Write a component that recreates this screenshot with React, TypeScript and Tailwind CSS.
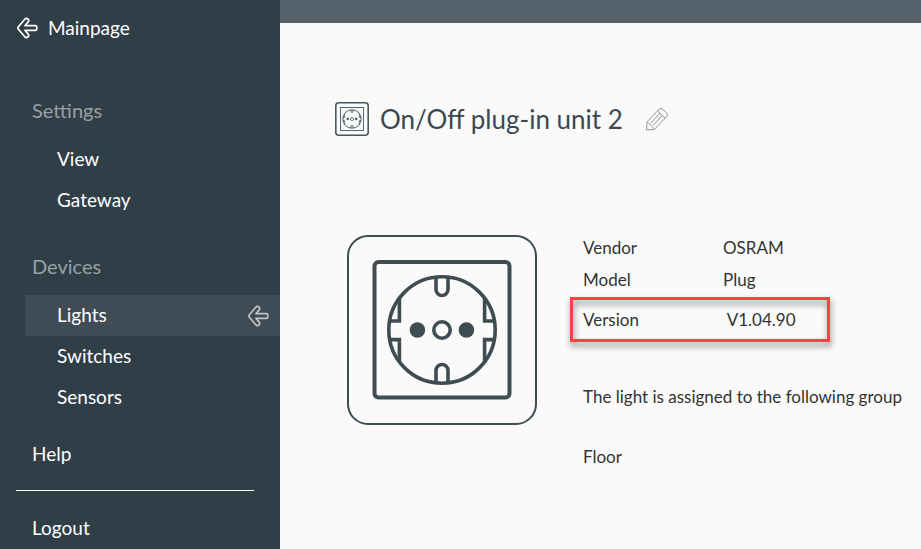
import clsx from 'clsx';

interface NavItem {
  label: string;
  active?: boolean;
}

const settingsItems: NavItem[] = [{ label: 'View' }, { label: 'Gateway' }];

const deviceItems: NavItem[] = [
  { label: 'Lights', active: true },
  { label: 'Switches' },
  { label: 'Sensors' },
];

const details = [
  { label: 'Vendor', value: 'OSRAM' },
  { label: 'Model', value: 'Plug' },
];

function ArrowIcon({ className }: { className?: string }) {
  return (
    <svg viewBox="0 0 22 22" fill="none" stroke="currentColor" strokeLinejoin="round" className={clsx('w-[22px] h-[22px] shrink-0', className)} aria-hidden="true">
      <path
        strokeWidth="1.7"
        d="M2.4 9.7 9 2Q10.4.8 11.9 2 13.3 3.4 12.2 4.9L8.9 8.7H19.3Q20.8 8.7 20.8 10.1V11.9Q20.8 13.3 19.3 13.3H8.9L12.2 17.1Q13.3 18.6 11.9 20 10.4 21.2 9 20L2.4 12.3Q1.3 11 2.4 9.7Z"
      />
    </svg>
  );
}

function SocketIcon() {
  return (
    <svg viewBox="0 0 190 190" fill="none" stroke="#3e4d52" className="w-[190px] h-[190px] shrink-0" role="img" aria-label="Plug">
      <rect x="1" y="1" width="188" height="188" rx="20" strokeWidth="2" />
      <rect x="27.5" y="27" width="135" height="135.5" rx="4" strokeWidth="4" />
      <g strokeWidth="3.6">
        <circle cx="95" cy="95" r="53.2" />
        <circle cx="95" cy="95" r="8.2" />
        <path d="M89 42.5V54.5a6 6 0 0 0 12 0V42.5M89 147.5V135.5a6 6 0 0 1 12 0V147.5" />
        <path d="M52.4 62V86H43M52.4 128V104.6H43M137.6 62V86H147M137.6 128V104.6H147" />
      </g>
      <circle cx="70.4" cy="95" r="7.8" fill="#3e4d52" stroke="none" />
      <circle cx="119.4" cy="95" r="7.8" fill="#3e4d52" stroke="none" />
    </svg>
  );
}

function SmallSocketIcon() {
  return (
    <svg viewBox="0 0 34 34" fill="none" stroke="#4a585f" className="w-[34px] h-[34px] shrink-0" aria-hidden="true">
      <rect x="0.8" y="0.8" width="32.4" height="32.4" rx="3" strokeWidth="1.6" />
      <rect x="5.5" y="5.5" width="23" height="23" strokeWidth="0.9" />
      <circle cx="17" cy="17" r="9.2" strokeWidth="1" />
      <circle cx="17" cy="17" r="1.5" strokeWidth="0.8" />
      <path d="M16 8v2.2h2V8M16 26v-2.2h2V26M9.6 11.5v4H8M9.6 22.5v-4H8M24.4 11.5v4H26M24.4 22.5v-4H26" strokeWidth="0.8" />
      <circle cx="12.8" cy="17" r="1.3" fill="#4a585f" stroke="none" />
      <circle cx="21.2" cy="17" r="1.3" fill="#4a585f" stroke="none" />
    </svg>
  );
}

function PencilIcon() {
  return (
    <svg viewBox="0 0 24 24" fill="none" stroke="#8f9598" strokeWidth="1" strokeLinejoin="round" className="w-6 h-6" aria-hidden="true">
      <path d="M1.5 23 2.2 14.8 14.3 2Q15.7.7 17.3 1.9L21.9 6.2Q23.2 7.7 22 9.3L9.6 22.2Z" />
      <path d="M2.2 14.8 9.6 22.2M5.6 16.2 15.2 6M7.8 18.6 17.8 8.2M12.4 3.9 20.1 11.2" />
    </svg>
  );
}

function NavGroup({ title, items }: { title: string; items: NavItem[] }) {
  return (
    <section>
      <h2 className="flex h-[58px] items-center pl-8 text-xl text-[#98a0a5]">{title}</h2>
      <ul>
        {items.map((item) => (
          <li key={item.label} className="pl-[25px]">
            <a
              href="#"
              className={clsx(
                'flex h-[41px] items-center justify-between pl-8 pr-[11px]',
                item.active && 'bg-[#3f4c56]'
              )}
            >
              {item.label}
              {item.active && <ArrowIcon className="text-[#bfc4c7]" />}
            </a>
          </li>
        ))}
      </ul>
    </section>
  );
}

function Sidebar() {
  return (
    <nav className="w-[280px] shrink-0 bg-[#303e48] text-[19px] text-white">
      <a href="#" className="flex h-14 items-center gap-[10px] pl-4">
        <ArrowIcon />
        Mainpage
      </a>
      <div className="mt-[25px] flex flex-col gap-4">
        <NavGroup title="Settings" items={settingsItems} />
        <NavGroup title="Devices" items={deviceItems} />
      </div>
      <a href="#" className="mt-4 flex h-10 items-center pl-8">
        Help
      </a>
      <hr className="ml-4 mr-[26px] mt-4 mb-[17px] border-white" />
      <a href="#" className="flex h-10 items-center pl-8">
        Logout
      </a>
    </nav>
  );
}

export default function App() {
  return (
    <div className="flex min-h-screen bg-[#fafafa] font-[Lato,sans-serif]">
      <Sidebar />
      <div className="min-w-0 flex-1">
        <div className="h-[23px] bg-[#56626b]" />
        <main className="pl-[55px] pt-[76px]">
          <header className="flex h-10 items-center">
            <SmallSocketIcon />
            <h1 className="ml-[11px] text-[26px] text-[#3c4850]">On/Off plug-in unit 2</h1>
            <button type="button" aria-label="Edit name" className="ml-[22px]">
              <PencilIcon />
            </button>
          </header>
          <div className="mt-[93px] flex pl-3">
            <div className="pt-[3px]">
              <SocketIcon />
            </div>
            <div className="ml-[46px] text-[17px] leading-8 text-[#333]">
              <dl>
                {details.map((row) => (
                  <div key={row.label} className="flex">
                    <dt className="w-[140px]">{row.label}</dt>
                    <dd>{row.value}</dd>
                  </div>
                ))}
                <div className="relative mt-2 flex">
                  <dt className="w-[140px]">Version</dt>
                  <dd>&nbsp;V1.04.90</dd>
                  <span className="pointer-events-none absolute -left-[13px] -top-[7px] h-[45px] w-[260px] border-3 border-[#f94343] drop-shadow-[1px_4px_3px_rgba(0,0,0,0.5)]" />
                </div>
              </dl>
              <p className="mt-[45px]">The light is assigned to the following group</p>
              <p className="mt-7">Floor</p>
            </div>
          </div>
        </main>
      </div>
    </div>
  );
}
